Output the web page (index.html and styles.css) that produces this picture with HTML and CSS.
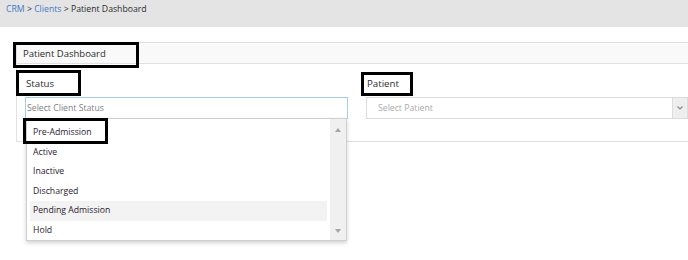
FILE: index.html
```html
<!DOCTYPE html>
<html lang="en">
<head>
    <meta charset="UTF-8">
    <title>Patient Dashboard</title>
    <link rel="stylesheet" href="styles.css">
</head>
<body>
    <div class="crumbs">
        <a href="#">CRM</a> &gt; <a href="#">Clients</a> &gt; Patient Dashboard
    </div>
    <div class="panel">
        <div class="panel-head">
            <span class="mark mark-title">Patient Dashboard</span>
        </div>
        <div class="panel-body">
            <div class="field">
                <label><span class="mark mark-status">Status</span></label>
                <div class="select focused">Select Client Status</div>
                <div class="dropdown">
                    <ul class="options">
                        <li><span class="mark mark-option">Pre-Admission</span></li>
                        <li>Active</li>
                        <li>Inactive</li>
                        <li>Discharged</li>
                        <li class="hover">Pending Admission</li>
                        <li>Hold</li>
                    </ul>
                    <div class="scrollbar">
                        <span class="arrow up"></span>
                        <span class="arrow down"></span>
                    </div>
                </div>
            </div>
            <div class="field">
                <label><span class="mark mark-patient">Patient</span></label>
                <div class="select">
                    <span class="placeholder">Select Patient</span>
                    <span class="caret">
                        <svg width="6" height="4" viewBox="0 0 6 4"><path d="M0.5 0.5 L3 3 L5.5 0.5" fill="none" stroke="#8a8a8a" stroke-width="1.2"/></svg>
                    </span>
                </div>
            </div>
        </div>
    </div>
</body>
</html>
```

FILE: styles.css
```css
html, body {
    min-height: 260px;
}
body {
    margin: 0;
    font-family: "Open Sans", "Liberation Sans", sans-serif;
    color: #2b2b2b;
    background: #fff;
}
.crumbs {
    height: 27px;
    padding-left: 6px;
    background-color: #e4e4e4;
    font-size: 8.7px;
    line-height: 19px;
    color: #2b2b2b;
}
.crumbs a {
    color: #4179c2;
    text-decoration: none;
}
.panel {
    margin: 15px 0 0 16px;
    border-top: 1px solid #dedede;
    border-left: 1px solid #e2e2e2;
    border-bottom: 1px solid #dedede;
}
.panel-head {
    height: 20px;
    padding-left: 6px;
    background-color: #f9f9f9;
    border-bottom: 1px solid #e0e0e0;
    font-size: 9.5px;
    line-height: 21px;
}
.panel-body {
    display: grid;
    grid-template-columns: 323px 322px;
    column-gap: 18px;
    padding: 13px 0 22px 8px;
}
.field {
    position: relative;
}
.field label {
    display: block;
    padding-left: 1px;
    margin-bottom: 5px;
    font-size: 9.7px;
    line-height: 16px;
    margin-top: -1px;
}
.select {
    box-sizing: border-box;
    display: flex;
    align-items: center;
    height: 22px;
    border: 1px solid #dcdcdc;
    font-size: 8.7px;
    color: #aaa;
}
.select.focused {
    border-color: #a3cdef;
    padding-left: 1px;
    color: #808080;
}
.placeholder {
    flex: 1;
    padding-left: 11px;
}
.caret {
    box-sizing: border-box;
    display: flex;
    align-items: center;
    justify-content: center;
    width: 15px;
    height: 100%;
    background-color: #eee;
    border-left: 1px solid #ddd;
}
.dropdown {
    position: absolute;
    top: 41px;
    left: 1px;
    box-sizing: border-box;
    display: flex;
    width: 321px;
    height: 123px;
    background: #fff;
    border: 1px solid #cfcfcf;
    box-shadow: 0 2px 4px rgba(0, 0, 0, 0.18);
    z-index: 2;
}
.options {
    flex: 1;
    list-style: none;
    margin: 0;
    padding: 4px 3px 0 3px;
    font-size: 8.7px;
    color: #2a2030;
}
.options li {
    height: 19.5px;
    line-height: 19.5px;
    padding-left: 3px;
}
.options li.hover {
    background-color: #f3f3f3;
}
.scrollbar {
    width: 16px;
    display: flex;
    flex-direction: column;
    justify-content: space-between;
    align-items: center;
    padding: 9px 0 7px;
    background-color: #f0f0f0;
}
.arrow {
    width: 0;
    height: 0;
    border-left: 3.5px solid transparent;
    border-right: 3.5px solid transparent;
}
.arrow.up {
    border-bottom: 4px solid #a5a5a5;
}
.arrow.down {
    border-top: 4px solid #a5a5a5;
}

/* annotation boxes */
.mark {
    position: relative;
}
.mark::after {
    content: "";
    position: absolute;
    box-sizing: border-box;
    border: 3px solid #000;
}
.mark-title::after {
    left: -10px;
    top: -5px;
    width: 126px;
    height: 26px;
}
.mark-status::after {
    left: -10px;
    top: -7px;
    width: 65px;
    height: 26px;
}
.mark-patient::after {
    left: -6px;
    top: -5px;
    width: 52px;
    height: 24px;
}
.mark-option {
    display: inline-block;
}
.mark-option::after {
    left: -10px;
    top: -5px;
    width: 85px;
    height: 26px;
}
```
